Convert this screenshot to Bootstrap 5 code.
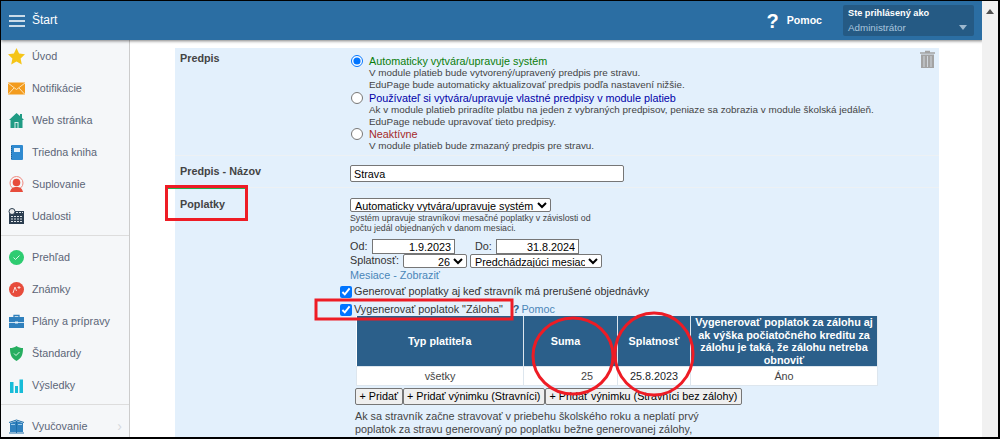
<!DOCTYPE html>
<html lang="sk">
<head>
  <meta charset="UTF-8">
  <title>Štart</title>
  <link href="https://cdn.jsdelivr.net/npm/bootstrap@5.3.0/dist/css/bootstrap.min.css" rel="stylesheet">
  <style>
    html, body { height: 100%; overflow: hidden; background: #fff; }
    body { font-family: "Liberation Sans", Arial, sans-serif; font-size: 10.8px; color: #333; line-height: 1.2; }
    .app-frame { width: 1000px; height: 439px; border: 1px solid #000; border-width: 1px 2px 2px 1px; position: relative; overflow: hidden; }
    .app-top { height: 39px; background: #2b6ea3; color: #fff; box-shadow: 0 1px 3px rgba(0,0,0,.5); position: relative; z-index: 2; width: 982px; }
    .top-title { font-size: 12px; margin-left: 7px; }
    .top-help { font-size: 10.6px; font-weight: bold; margin-right: 21px; }
    .top-help b { font-size: 20px; margin-right: 8px; }
    .user-box { width: 131px; height: 31px; background: #255a84; border-radius: 2px; margin-right: 9px; padding: 1px 5px; font-size: 9.2px; position: relative; }
    .user-box strong { display: block; line-height: 13px; margin-top: 1px; }
    .user-box span { color: #a9c6de; display: block; font-size: 9.8px; line-height: 14px; margin-top: 1px; }
    .user-caret { position: absolute; right: 7px; top: 20px; border: 4px solid transparent; border-top: 5px solid #9db8ce; }
    .app-body { height: 397px; }
    .side-menu { width: 129px; flex: none; background: #f5f7f9; border-right: 1px solid #ccc; color: #5b6577; }
    .side-item { height: 32px; display: flex; align-items: center; padding-left: 7px; gap: 7px; }
    .side-item svg { width: 17px; height: 17px; flex: none; }
    .side-gap { border-top: 1px solid #ddd; margin: 3px 0 5px; }
    .side-more { margin-left: auto; margin-right: 7px; color: #d5d9de; font-size: 14px; }
    .main-area { flex: 1; padding: 8px 44px 0 45px; min-width: 0; overflow: hidden; }
    .form-panel { background: #e3f0fc; position: relative; height: 400px; width: 764px; }
    .form-line { display: flex; border-bottom: 1px solid #edf1f4; }
    .form-name { width: 175px; flex: none; padding: 4px 0 0 5px; font-weight: bold; color: #444; }
    .opt-line { display: flex; gap: 6px; }
    .opt-line input { margin: 0 0 0 1px; width: 12px; height: 12px; flex: none; accent-color: #0075ff; }
    .opt-title { line-height: 12px; font-size: 10.8px; }
    .opt-note { font-size: 9.9px; line-height: 11.5px; color: #444; }
    .tone-green { color: #0a7d0a; }
    .tone-blue { color: #0000a8; }
    .tone-red { color: #a52a2a; }
    .name-input { width: 274px; height: 17px; font-size: 10.8px; font-family: inherit; padding: 0 3px; border: 1px solid #767676; border-radius: 2px; color: #000; display: block; }
    .sel-box { font-family: inherit; font-size: 10.8px; height: 14px; padding: 0; border: 1px solid #767676; border-radius: 2px; background: #fff; color: #000; }
    .date-box { font-family: inherit; font-size: 10.8px; height: 15px; width: 83px; text-align: right; border: 1px solid #767676; padding: 0 3px; color: #000; }
    .plain-link { color: #4a86b8; text-decoration: none; }
    .check-line { display: flex; align-items: center; gap: 2px; margin-left: -10px; height: 18px; }
    .check-line input { margin: 0; width: 12px; height: 12px; accent-color: #0075ff; }
    .help-mark { color: #2b5f8a; font-weight: bold; margin-left: 8px; }
    table.fee-grid { width: 522px; margin: -3px 0 2px 6px; border-collapse: collapse; table-layout: fixed; font-size: 10.8px; background: #fff; }
    table.fee-grid th { background: #2b5f8a; color: #fff; text-align: center; vertical-align: middle; padding: 0 2px; height: 51px; border-right: 1px solid #dde6ee; line-height: 12.5px; }
    table.fee-grid th.sum-head { padding-right: 12px; }
    table.fee-grid td { height: 19px; padding: 0 4px; border: 1px solid #dde6ee; text-align: center; color: #444; }
    table.fee-grid td.sum-cell { text-align: right; padding-right: 24px; }
    .fee-btn { font-family: inherit; font-size: 10.8px; height: 17px; padding: 0 3.5px; line-height: 13px; background: #efefef; border: 1px solid #767676; border-radius: 2px; color: #000; }
    .fee-note { margin: 5px 0 0 5px; line-height: 12.5px; color: #444; white-space: nowrap; }
    .scroll-rail { position: absolute; top: 0; right: 0; width: 16px; height: 100%; background: #f1f1f1; z-index: 3; }
    .scroll-arrow { position: absolute; top: 8px; left: 4px; border: 4px solid transparent; border-bottom: 5px solid #505050; border-top: 0; }
    .trash-mark { position: absolute; right: 4px; top: 2px; width: 15px; height: 18px; }
    .note-marks { position: absolute; left: 0; top: 0; width: 1001px; height: 440px; z-index: 4; pointer-events: none; }
  </style>
</head>
<body>
  <div class="app-frame">
    <div class="app-top d-flex align-items-center">
      <svg width="16" height="12" viewBox="0 0 16 12" class="ms-2"><path d="M0 1h16M0 6h16M0 11h16" stroke="#fff" stroke-width="1.6"/></svg>
      <span class="top-title">Štart</span>
      <span class="top-help ms-auto d-flex align-items-center"><b>?</b>Pomoc</span>
      <div class="user-box">
        <strong>Ste prihlásený ako</strong>
        <span>Administrátor</span>
        <i class="user-caret"></i>
      </div>
    </div>

    <div class="app-body d-flex">
      <div class="side-menu">
        <div class="side-item"><svg viewBox="0 0 17 17"><path d="M8.5 0l2.6 5.6 5.9.7-4.4 4.1 1.2 6-5.3-3-5.3 3 1.2-6L0 6.300l5.900-.7z" fill="#f5c518"/></svg>Úvod</div>
        <div class="side-item"><svg viewBox="0 0 17 17"><rect y="2.500" width="17" height="12" fill="#f39c1f"/><path d="M0 3l8.500 6.500L17 3M0 14.500l6-6.500M17 14.500l-6-6.500" stroke="#fde3b5" fill="none"/></svg>Notifikácie</div>
        <div class="side-item"><svg viewBox="0 0 17 17"><path d="M8.500 1L1 8h1.500v8h12V8H16l-2-2V2h-2v2z" fill="#1f9b84"/><path d="M6.500 16V10h4v6h-1v-5h-2v5z" fill="#d7efe9"/></svg>Web stránka</div>
        <div class="side-item"><svg viewBox="0 0 17 17"><rect x="3" y="1" width="12" height="15" rx="1" fill="#2f8ad0"/><rect x="6" y="4" width="6" height="4" fill="#e4f1fb"/><path d="M3.500 2v13" stroke="#1c5f94" stroke-dasharray="1 1"/></svg>Triedna kniha</div>
        <div class="side-item"><svg viewBox="0 0 17 17"><circle cx="8.500" cy="7" r="6.500" fill="none" stroke="#ef8a80"/><circle cx="8.500" cy="6.500" r="3.800" fill="#e74c3c"/><path d="M2 16c1-4 3-5 6.500-5s5.500 1 6.500 5z" fill="#e74c3c"/></svg>Suplovanie</div>
        <div class="side-item"><svg viewBox="0 0 17 17"><rect x="1" y="3" width="15" height="13" fill="#2c3e50"/><circle cx="4" cy="3.500" r="3" fill="#eee" stroke="#2c3e50"/><path d="M4 2v1.500M8 4.500h7M3 8.500h11M3 11h11M3 13.500h11" stroke="#dfe4e8" stroke-dasharray="2 1"/></svg>Udalosti</div>
        <div class="side-gap"></div>
        <div class="side-item"><svg viewBox="0 0 17 17"><circle cx="8.500" cy="8.500" r="7.500" fill="#2ecc71"/><path d="M5.500 8.500l2 2 4-4" stroke="#d9f7e6" fill="none"/></svg>Prehľad</div>
        <div class="side-item"><svg viewBox="0 0 17 17"><circle cx="8.500" cy="8.500" r="7.500" fill="#e74c3c"/><path d="M5 12l2-6 1.500 4M11 5v3M9.500 6.500h3" stroke="#fbdcd8" fill="none"/></svg>Známky</div>
        <div class="side-item"><svg viewBox="0 0 17 17"><rect x="1" y="4" width="15" height="11" fill="#2f80bd"/><path d="M1 9.500h15" stroke="#cfe4f3"/><path d="M6 4V2.500h5V4" stroke="#2f80bd" fill="none" stroke-width="1.300"/><rect x="7" y="8.500" width="3" height="2" fill="#e6f1f9"/></svg>Plány a prípravy</div>
        <div class="side-item"><svg viewBox="0 0 17 17"><path d="M8.500 1c2 1.500 4 2 6.500 2 0 6-1 10-6.500 13C3 13 2 9 2 3c2.500 0 4.500-.5 6.500-2z" fill="#27ae60"/><path d="M6 8.500l2 2 3.500-3.500" stroke="#d9f7e6" fill="none"/></svg>Štandardy</div>
        <div class="side-item"><svg viewBox="0 0 17 17"><path d="M2 5h3.500v11H2zM7 9h3v7H7zM11.500 2.500H15V16h-3.500z" fill="#17bcd8"/></svg>Výsledky</div>
        <div class="side-gap"></div>
        <div class="side-item"><svg viewBox="0 0 17 17"><path d="M8.500 3L2 5v9h13V5z" fill="#2f80bd"/><path d="M1 4.500L8.500 2 16 4.500M1 15h15M8.500 3v12" stroke="#1f6ea8" fill="none"/><path d="M3 6.500h4M10 6.500h4" stroke="#9cc9e8"/></svg>Vyučovanie<span class="side-more">›</span></div>
      </div>

      <div class="main-area">
        <div class="form-panel">
          <svg class="trash-mark" viewBox="0 0 15 18"><path d="M5 1.500h5M0 3h15" stroke="#a3a3a3" stroke-width="1.500"/><path d="M1 4.500h13V18H1z" fill="#a3a3a3"/><path d="M4 6v11M7.500 6v11M11 6v11" stroke="#d0d6dc"/></svg>

          <div class="form-line" style="height:108px">
            <div class="form-name">Predpis</div>
            <div>
              <div class="opt-line" style="margin-top:7px">
                <input type="radio" name="rule" checked>
                <div><div class="opt-title tone-green">Automaticky vytvára/upravuje systém</div>
                <div class="opt-note">V module platieb bude vytvorený/upravený predpis pre stravu.<br>EduPage bude automaticky aktualizovať predpis podľa nastavení nižšie.</div></div>
              </div>
              <div class="opt-line" style="margin-top:2px">
                <input type="radio" name="rule">
                <div><div class="opt-title tone-blue">Používateľ si vytvára/upravuje vlastné predpisy v module platieb</div>
                <div class="opt-note">Ak v module platieb priradíte platbu na jeden z vybraných predpisov, peniaze sa zobrazia v module školská jedáleň.<br>EduPage nebude upravovať tieto predpisy.</div></div>
              </div>
              <div class="opt-line" style="margin-top:1px">
                <input type="radio" name="rule">
                <div><div class="opt-title tone-red">Neaktívne</div>
                <div class="opt-note">V module platieb bude zmazaný predpis pre stravu.</div></div>
              </div>
            </div>
          </div>

          <div class="form-line" style="height:32px">
            <div class="form-name" style="padding-top:9px">Predpis - Názov</div>
            <div style="padding-top:9px"><input class="name-input" type="text" value="Strava"></div>
          </div>

          <div class="form-line border-0">
            <div class="form-name" style="padding-top:10px">Poplatky</div>
            <div>
              <select class="sel-box d-block" style="width:201px;margin-top:10px"><option>Automaticky vytvára/upravuje systém</option></select>
              <div class="opt-note" style="line-height:10px;font-size:8.800px;margin-top:1px">Systém upravuje stravníkovi mesačné poplatky v závislosti od<br>počtu jedál objednaných v danom mesiaci.</div>
              <div class="d-flex align-items-center" style="margin-top:6px">
                <span style="width:22px">Od:</span><input class="date-box" value="1.9.2023">
                <span style="width:21px;margin-left:20px">Do:</span><input class="date-box" value="31.8.2024">
              </div>
              <div class="d-flex align-items-center" style="height:13px">
                <span style="width:53px">Splatnosť:</span>
                <select class="sel-box" style="width:64px;text-align:right"><option>26</option></select>
                <select class="sel-box" style="width:132px;margin-left:3px"><option>Predchádzajúci mesiac</option></select>
              </div>
              <div style="margin-top:2px"><a class="plain-link" href="#">Mesiace - Zobraziť</a></div>
              <div class="check-line" style="margin-top:1px"><input type="checkbox" checked><span>Generovať poplatky aj keď stravník má prerušené objednávky</span></div>
              <div class="check-line"><input type="checkbox" checked><span>Vygenerovať poplatok "Záloha"</span><span class="help-mark">?</span> <a class="plain-link" href="#">Pomoc</a></div>
              <table class="fee-grid">
                <colgroup><col style="width:167px"><col style="width:94px"><col style="width:73px"><col></colgroup>
                <tr><th>Typ platiteľa</th><th class="sum-head">Suma</th><th>Splatnosť</th><th>Vygenerovať poplatok za zálohu aj<br>ak výška počiatočného kreditu za<br>zálohu je taká, že zálohu netreba<br>obnoviť</th></tr>
                <tr><td>všetky</td><td class="sum-cell">25</td><td class="text-dark">25.8.2023</td><td>Áno</td></tr>
              </table>
              <div class="d-flex" style="margin-left:5px">
                <button class="fee-btn">+ Pridať</button><button class="fee-btn">+ Pridať výnimku (Stravníci)</button><button class="fee-btn">+ Pridať výnimku (Stravníci bez zálohy)</button>
              </div>
              <div class="fee-note">Ak sa stravník začne stravovať v priebehu školského roku a neplatí prvý<br>poplatok za stravu generovaný po poplatku bežne generovanej zálohy,<br>podobne ako záloha na nasledujúce mesiace.</div>
            </div>
          </div>
        </div>
      </div>
    </div>

    <div class="scroll-rail"><i class="scroll-arrow"></i></div>
  </div>

  <svg class="note-marks" viewBox="0 0 1001 440" fill="none">
    <rect x="167.500" y="188.500" width="78" height="32" stroke="#22b14c"/>
    <path d="M166.500 186V219.500H246.500V186.500H165" stroke="#ee1c25" stroke-width="3"/>
    <rect x="316" y="300" width="196" height="19" stroke="#ee1c25" stroke-width="3"/>
    <ellipse cx="573" cy="356" rx="40" ry="38" stroke="#ee1c25" stroke-width="3"/>
    <ellipse cx="654" cy="354" rx="39" ry="41" stroke="#ee1c25" stroke-width="3"/>
  </svg>
</body>
</html>
